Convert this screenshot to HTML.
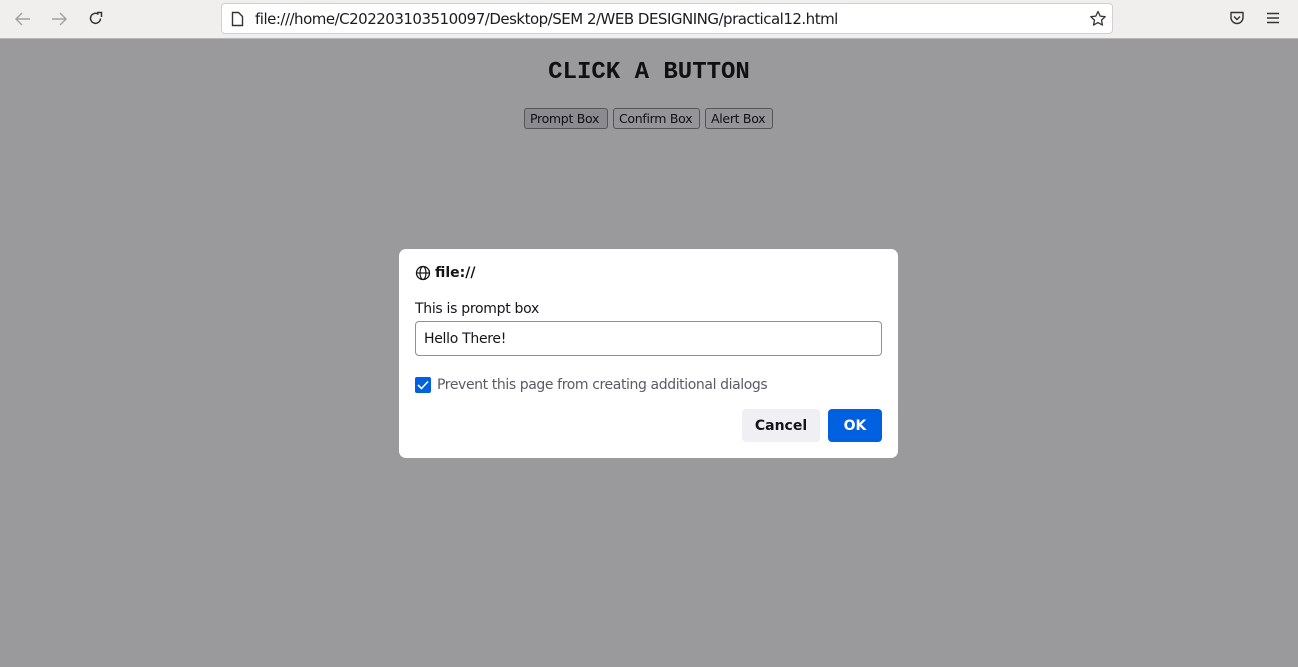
<!DOCTYPE html>
<html><head><style>
*{box-sizing:border-box;margin:0;padding:0}
body{width:1298px;height:667px;overflow:hidden;background:#9a9a9c;font-family:"Liberation Sans","DejaVu Sans",sans-serif;position:relative}
.tb{position:absolute;left:0;top:0;width:1298px;height:39px;background:#f0efed;border-bottom:1px solid #b8b8b8}
.url{position:absolute;left:221px;top:3px;width:892px;height:31px;background:#fff;border:1px solid #cfcfd4;border-radius:4px}
.url span{position:absolute;left:33px;top:6px;font-size:15px;color:#1c1b22;font-family:"DejaVu Sans",sans-serif;letter-spacing:-0.5px}
svg{position:absolute}
h1{position:absolute;left:0;width:1298px;top:59px;text-align:center;font-family:"Liberation Mono",monospace;font-size:24px;font-weight:bold;color:#111}
.btn{position:absolute;top:108px;height:21px;border:1px solid #555;border-radius:3px;background:#8e8e92;font-family:"DejaVu Sans",sans-serif;font-size:12.5px;color:#111;line-height:19px;padding:0 5px;letter-spacing:-0.3px}
.dlg{position:absolute;left:399px;top:249px;width:499px;height:209px;background:#fff;border-radius:7px;font-family:"DejaVu Sans",sans-serif;color:#15141a}
.dlg .t{position:absolute;left:36px;top:16px;font-size:14px;font-weight:bold}
.dlg .m{position:absolute;left:16px;top:52px;font-size:14px;letter-spacing:-0.3px}
.inp{position:absolute;left:16px;top:72px;width:467px;height:35px;border:1px solid #8f8f9d;border-radius:4px;font-size:14px;padding:9px 8px;letter-spacing:-0.3px}
.cb{position:absolute;left:16px;top:128px;width:16px;height:16px;background:#0061e0;border-radius:2px}
.cbl{position:absolute;left:38px;top:128px;font-size:14px;color:#5b5b66;letter-spacing:-0.4px}
.b{position:absolute;top:160px;height:33px;border-radius:4px;font-size:14px;font-weight:bold;text-align:center;line-height:35px}
</style></head><body>
<div class="tb">
<svg style="left:14px;top:11px" width="18" height="16" viewBox="0 0 18 16"><path d="M16 8H2M8 2L2 8l6 6" stroke="#a0a0a0" stroke-width="1.4" fill="none"/></svg>
<svg style="left:50px;top:11px" width="18" height="16" viewBox="0 0 18 16"><path d="M2 8h14M10 2l6 6-6 6" stroke="#a0a0a0" stroke-width="1.4" fill="none"/></svg>
<svg style="left:87px;top:10px" width="17" height="17" viewBox="0 0 17 17"><path d="M13.5 8.5A5 5 0 1 1 11.5 4.3" stroke="#333" stroke-width="1.5" fill="none"/><path d="M10 2.5h4.5V7" stroke="#333" stroke-width="1.5" fill="none"/></svg>
<div class="url"><svg style="left:9px;top:7px" width="13" height="16" viewBox="0 0 13 16"><path d="M1.5 1.5h6l4 4v9h-10z" stroke="#333" stroke-width="1.4" fill="none"/></svg><span>file:///home/C202203103510097/Desktop/SEM 2/WEB DESIGNING/practical12.html</span>
<svg style="left:867px;top:6px" width="18" height="18" viewBox="0 0 18 18"><path d="M9 1.5l2.2 4.6 5 .6-3.7 3.4 1 5-4.5-2.5-4.5 2.5 1-5L1.8 6.7l5-.6z" stroke="#333" stroke-width="1.3" fill="none" stroke-linejoin="round"/></svg></div>
<svg style="left:1229px;top:10px" width="16" height="16" viewBox="0 0 16 16"><path d="M2 2.5h12v5a6 6 0 0 1-12 0z" stroke="#333" stroke-width="1.4" fill="none" stroke-linejoin="round"/><path d="M5 6.5l3 3 3-3" stroke="#333" stroke-width="1.4" fill="none"/></svg>
<svg style="left:1266px;top:11px" width="14" height="14" viewBox="0 0 14 14"><path d="M1 2.5h12M1 7h12M1 11.5h12" stroke="#333" stroke-width="1.4"/></svg>
</div>
<h1>CLICK A BUTTON</h1>
<div class="btn" style="left:524px;width:84px;background:#8a8a90">Prompt Box</div>
<div class="btn" style="left:613px;width:87px;background:#959599">Confirm Box</div>
<div class="btn" style="left:705px;width:68px;background:#959599">Alert Box</div>
<div class="dlg">
<svg style="left:16px;top:16px" width="16" height="16" viewBox="0 0 16 16"><circle cx="8" cy="8" r="6.5" stroke="#15141a" stroke-width="1.3" fill="none"/><ellipse cx="8" cy="8" rx="3" ry="6.5" stroke="#15141a" stroke-width="1.2" fill="none"/><path d="M1.5 8h13" stroke="#15141a" stroke-width="1.2"/></svg>
<div class="t">file://</div>
<div class="m">This is prompt box</div>
<div class="inp">Hello There!</div>
<div class="cb"><svg style="left:2px;top:3px" width="12" height="10" viewBox="0 0 12 10"><path d="M1 5l3.5 3.5L11 1.5" stroke="#fff" stroke-width="1.6" fill="none"/></svg></div>
<div class="cbl">Prevent this page from creating additional dialogs</div>
<div class="b" style="left:343px;width:78px;background:#f0f0f4">Cancel</div>
<div class="b" style="left:429px;width:54px;background:#0061e0;color:#fff">OK</div>
</div>
</body></html>
